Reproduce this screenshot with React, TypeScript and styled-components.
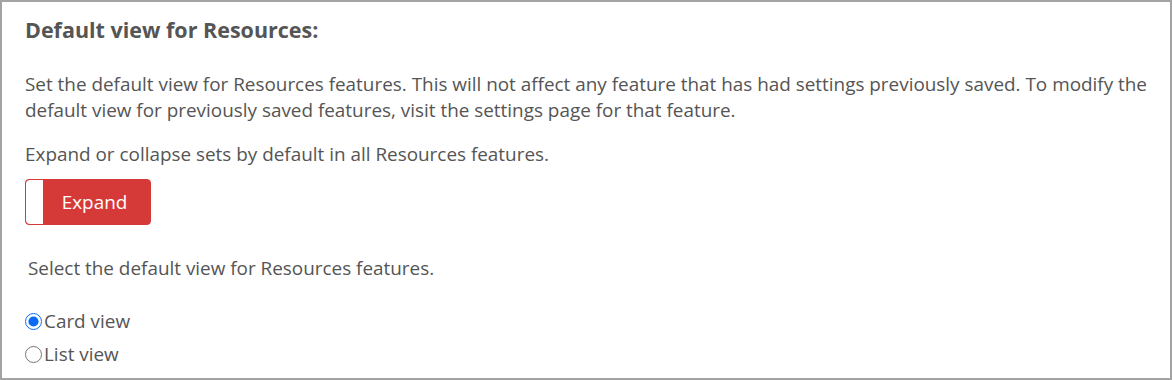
import React, { useState } from 'react'
import styled, { createGlobalStyle } from 'styled-components'

const GlobalStyle = createGlobalStyle`
    html, body {
        margin: 0;
        padding: 0;
        background: #ffffff;
    }
    * {
        box-sizing: border-box;
    }
`

const Panel = styled.div`
    width: 1172px;
    height: 380px;
    border: 2px solid #a3a3a3;
    padding: 14px 18px 0 23px;
    font-family: 'Open Sans', 'Noto Sans', sans-serif;
    color: #555555;
    overflow: hidden;
`

const Title = styled.h2`
    margin: 0;
    font-size: 21.5px;
    font-weight: 700;
    line-height: 28px;
    color: #555555;
`

const Text = styled.p<{ $indent?: number }>`
    margin: 0;
    font-size: 18.9px;
    line-height: 26px;
    padding-left: ${(p) => p.$indent || 0}px;
`

const Intro = styled(Text)`
    margin-top: 27px;
`

const Hint = styled(Text)`
    margin-top: 18px;
`

const Toggle = styled.button`
    margin-top: 12px;
    width: 126px;
    height: 46px;
    padding: 0;
    border: 1px solid #d63a38;
    border-radius: 4px;
    background-color: #d63a38;
    display: flex;
    align-items: stretch;
    cursor: pointer;
    overflow: hidden;
`

const Knob = styled.span`
    width: 17px;
    background-color: #ffffff;
    border-radius: 4px 0 0 4px;
`

const ToggleLabel = styled.span`
    flex: 1;
    display: flex;
    align-items: center;
    justify-content: center;
    padding-right: 4px;
    font-family: 'Open Sans', 'Noto Sans', sans-serif;
    font-size: 18.9px;
    color: #ffffff;
`

const Select = styled(Text)`
    margin-top: 30px;
`

const RadioGroup = styled.div`
    margin-top: 27px;
    display: flex;
    flex-direction: column;
    gap: 7px;
`

const RadioRow = styled.label`
    display: flex;
    align-items: center;
    gap: 2px;
    font-size: 18.9px;
    line-height: 26px;
    cursor: pointer;
`

const RadioInput = styled.input`
    margin: 0;
    width: 17px;
    height: 17px;
    accent-color: #0a6cf5;
`

const options = ['Card view', 'List view']

const App: React.FC = () => {
    const [expanded, setExpanded] = useState(true)
    const [view, setView] = useState('Card view')

    return (
        <>
            <GlobalStyle />
            <Panel>
                <Title>Default view for Resources:</Title>
                <Intro>
                    Set the default view for Resources features. This will not affect any feature that has had settings previously saved. To modify the default view for previously saved features, visit the settings page for that feature.
                </Intro>
                <Hint>Expand or collapse sets by default in all Resources features.</Hint>
                <Toggle onClick={() => setExpanded(!expanded)}>
                    <Knob />
                    <ToggleLabel>{expanded ? 'Expand' : 'Collapse'}</ToggleLabel>
                </Toggle>
                <Select $indent={3}>Select the default view for Resources features.</Select>
                <RadioGroup>
                    {options.map((item) => (
                        <RadioRow key={item}>
                            <RadioInput
                                type="radio"
                                name="view"
                                checked={view === item}
                                onChange={() => setView(item)}
                            />
                            {item}
                        </RadioRow>
                    ))}
                </RadioGroup>
            </Panel>
        </>
    )
}

export default App
